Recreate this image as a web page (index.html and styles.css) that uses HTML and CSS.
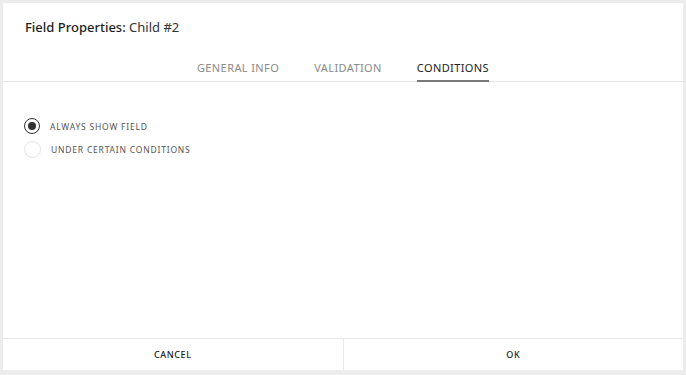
FILE: index.html
```html
<!DOCTYPE html>
<html lang="en">
<head>
  <meta charset="UTF-8">
  <title>Field Properties</title>
  <link rel="stylesheet" href="styles.css">
</head>
<body>
  <div class="modal">
    <div class="modal-header">
      <h2 class="title">Field Properties: <span class="title-name">Child #2</span></h2>
    </div>
    <nav class="tabs">
      <a class="tab">GENERAL INFO</a>
      <a class="tab">VALIDATION</a>
      <a class="tab active">CONDITIONS</a>
    </nav>
    <div class="modal-body">
      <label class="radio">
        <span class="radio-dot checked"></span>
        <span class="radio-label">ALWAYS SHOW FIELD</span>
      </label>
      <label class="radio">
        <span class="radio-dot"></span>
        <span class="radio-label">UNDER CERTAIN CONDITIONS</span>
      </label>
    </div>
    <div class="modal-footer">
      <button class="btn">CANCEL</button>
      <button class="btn">OK</button>
    </div>
  </div>
</body>
</html>
```

FILE: styles.css
```css
body {
  margin: 0;
  background-color: #ececec;
  font-family: "Noto Sans", Arial, sans-serif;
  height: 375px;
  overflow: hidden;
}

.modal {
  margin: 3px 3px 0 3px;
  width: 680px;
  height: 367px;
  background-color: #fff;
  display: flex;
  flex-direction: column;
}

.modal-header {
  padding: 15px 22px 0 22px;
  height: 28px;
}

.title {
  margin: 0;
  font-size: 13px;
  font-weight: 500;
  color: #1e1e1e;
}

.title-name {
  font-weight: 400;
  color: #333;
}

.tabs {
  display: flex;
  justify-content: center;
  gap: 35px;
  margin-top: 10px;
  border-bottom: 1px solid #e6e6e6;
}

.tab {
  font-size: 11px;
  letter-spacing: 0.4px;
  color: #8a8a8a;
  padding: 4px 0 5px 0;
  border-bottom: 2px solid transparent;
  margin-bottom: -1px;
}

.tab.active {
  color: #222;
  border-bottom-color: #7a7a7a;
}

.modal-body {
  flex: 1;
  padding: 36px 21px 0 21px;
  display: flex;
  flex-direction: column;
  gap: 7px;
}

.radio {
  display: flex;
  align-items: center;
  gap: 10px;
}

.radio-dot {
  width: 15px;
  height: 15px;
  border: 1px solid #e3e3e3;
  border-radius: 50%;
  position: relative;
}

.radio-dot.checked {
  border: 1.5px solid #333;
  width: 14px;
  height: 14px;
}

.radio-dot.checked::after {
  content: "";
  position: absolute;
  left: 3px;
  top: 3px;
  width: 8px;
  height: 8px;
  border-radius: 50%;
  background-color: #333;
}

.radio-label {
  font-size: 8.5px;
  letter-spacing: 0.8px;
  color: #555;
}

.modal-footer {
  display: flex;
  border-top: 1px solid #e9e9e9;
  height: 31px;
}

.btn {
  flex: 1;
  background: #fff;
  border: none;
  font-family: "Noto Sans", Arial, sans-serif;
  font-size: 9px;
  font-weight: 500;
  letter-spacing: 0.6px;
  color: #222;
  cursor: pointer;
}

.btn + .btn {
  border-left: 1px solid #e9e9e9;
}
```
